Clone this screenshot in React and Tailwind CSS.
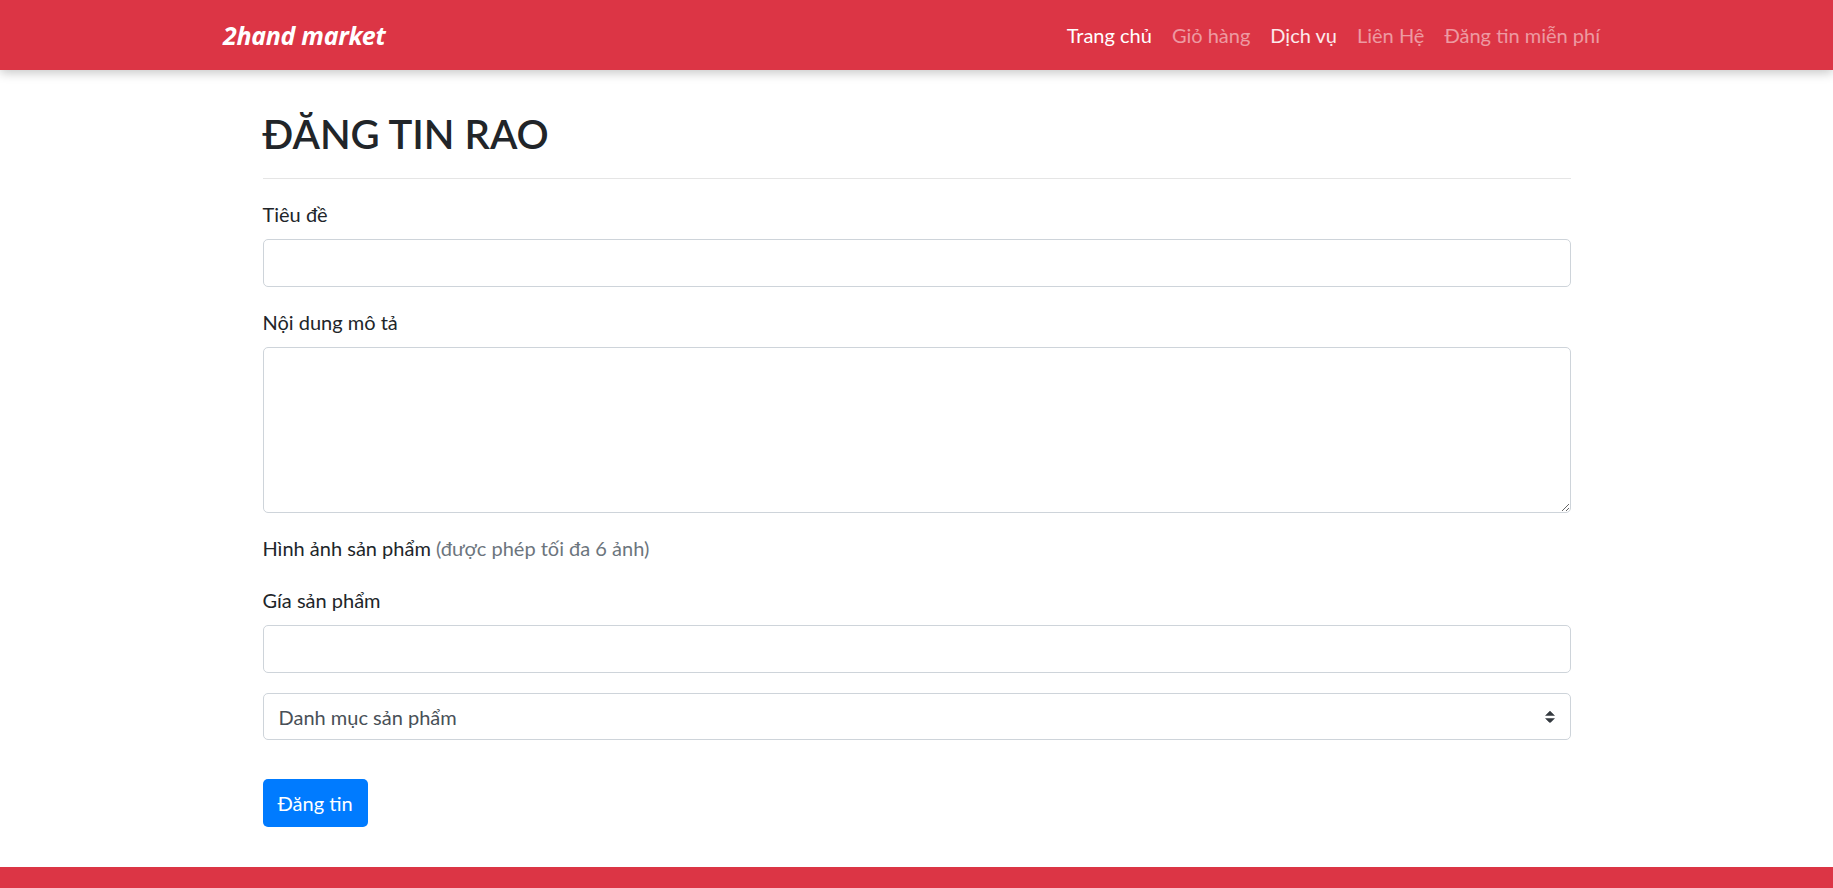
const navLinks = [
  { label: "Trang chủ", cls: "text-white" },
  { label: "Giỏ hàng", cls: "text-white/50" },
  { label: "Dịch vụ", cls: "text-white/90" },
  { label: "Liên Hệ", cls: "text-white/50" },
  { label: "Đăng tin miễn phí", cls: "text-white/50" },
];

function Navbar() {
  return (
    <nav className="relative z-10 h-[70px] bg-[#dc3545] shadow-[0_3px_10px_rgba(0,0,0,0.22)]">
      <div className="mx-auto flex h-full w-[1425px] items-center px-[19px]">
        <a className="font-['Noto_Sans',sans-serif] text-[25px] font-bold italic leading-none tracking-[-0.3px] text-white">
          2hand market
        </a>
        <ul className="ml-auto flex items-center">
          {navLinks.map((l) => (
            <li key={l.label}>
              <a className={`block px-[10px] text-[20px] leading-[30px] ${l.cls}`}>{l.label}</a>
            </li>
          ))}
        </ul>
      </div>
    </nav>
  );
}

function Label({ children, className = "" }) {
  return <label className={`block text-[20px] leading-[30px] text-[#212529] ${className}`}>{children}</label>;
}

const inputCls =
  "block w-full rounded-[5px] border border-[#ced4da] bg-white px-[15px] text-[20px] text-[#495057] outline-none";

export default function App() {
  return (
    <div className="h-[888px] overflow-hidden bg-white font-['Lato','Noto_Sans',sans-serif]">
      <Navbar />

      <main className="mx-auto w-[1308px] pt-[40px]">
        <h2 className="text-[40px] font-semibold leading-[48px] text-[#212529]">ĐĂNG TIN RAO</h2>
        <hr className="mt-[20px] border-t border-[#e5e5e5]" />

        <form className="mt-[20px]" onSubmit={(e) => e.preventDefault()}>
          <div className="mb-[20px]">
            <Label className="mb-[10px]">Tiêu đề</Label>
            <input type="text" className={`${inputCls} h-[48px]`} />
          </div>

          <div className="mb-[20px]">
            <Label className="mb-[10px]">Nội dung mô tả</Label>
            <textarea className={`${inputCls} h-[166px] py-[8px]`} />
          </div>

          <div className="mb-[22px]">
            <Label>
              Hình ảnh sản phẩm <span className="text-[#6c757d]">(được phép tối đa 6 ảnh)</span>
            </Label>
          </div>

          <div className="mb-[20px]">
            <Label className="mb-[10px]">Gía sản phẩm</Label>
            <input type="text" className={`${inputCls} h-[48px]`} />
          </div>

          <div className="relative">
            <select className={`${inputCls} h-[47px] appearance-none`} defaultValue="">
              <option value="">Danh mục sản phẩm</option>
            </select>
            <svg
              className="pointer-events-none absolute right-[16px] top-1/2 -translate-y-1/2"
              width="10"
              height="12.5"
              viewBox="0 0 4 5"
            >
              <path d="M2 0L0 2h4zm0 5L0 3h4z" fill="#343a40" />
            </svg>
          </div>

          <button
            type="submit"
            className="mt-[39px] h-[48px] rounded-[5px] bg-[#007bff] px-[15px] text-[20px] leading-[30px] text-white"
          >
            Đăng tin
          </button>
        </form>
      </main>

      <footer className="mt-[40px] h-[21px] bg-[#dc3545]" />
    </div>
  );
}
